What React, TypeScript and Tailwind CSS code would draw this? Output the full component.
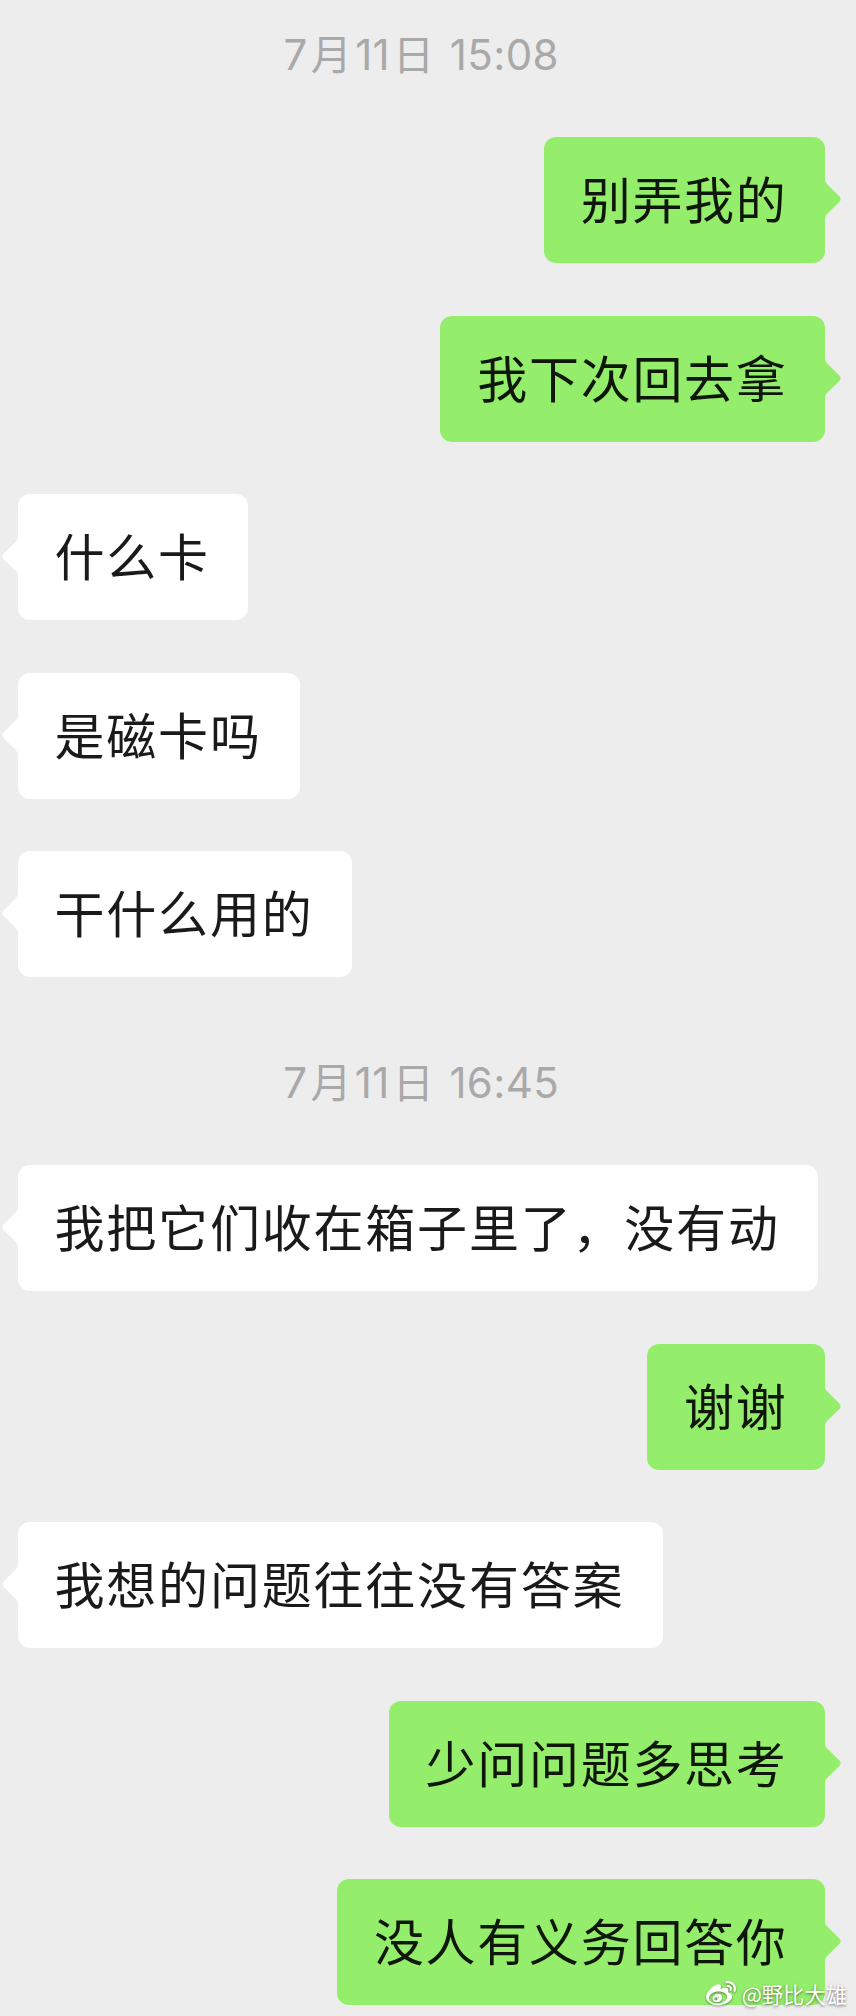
import { FaWeibo } from "react-icons/fa";

type Message = { from: "me" | "them"; text: string };

function Timestamp({ day, time, className = "" }: { day: [string, string]; time: string; className?: string }) {
  return (
    <div
      className={`flex h-[59.5px] items-center justify-center text-[42px] leading-none tracking-[0.4px] whitespace-pre text-[#a9a9a9] font-['Inter','Noto_Sans_CJK_SC',sans-serif] ${className}`}
    >
      <span>
        {day[0]}
        <span className="mx-[3px] text-[41px]">月</span>
        {day[1]}
        <span className="mx-[3px] text-[41px]">日</span> {time}
      </span>
    </div>
  );
}

function Tail({ className }: { className: string }) {
  return (
    <svg viewBox="0 0 16 40" className={`absolute top-[42px] h-10 w-4 ${className}`} fill="currentColor">
      <path d="M0 0V40C0 37.6 .9 36 2.6 34.4L14.4 22.9C16 21.2 16 19 14.4 17.4L2.6 5.8C.9 4.2 0 2.5 0 0Z" />
    </svg>
  );
}

function Bubble({ from, text }: Message) {
  const mine = from === "me";
  return (
    <div className={`flex ${mine ? "justify-end" : "justify-start"}`}>
      <div
        className={`relative flex h-[126px] items-center rounded-[12px] pb-[6px] pl-[37px] ${
          mine
            ? "bg-[#95ee6b] pr-[37.5px] tracking-[1.7px] text-[#0f170b]"
            : "bg-white pr-[38.2px] tracking-[1.8px] text-[#1a1a1a]"
        }`}
      >
        <Tail className={mine ? "left-full -ml-[0.5px] text-[#95ee6b]" : "right-full -mr-[0.5px] -scale-x-100 text-white"} />
        <span className="text-[50px] leading-none whitespace-nowrap">{text}</span>
      </div>
    </div>
  );
}

const afternoon: Message[] = [
  { from: "me", text: "别弄我的" },
  { from: "me", text: "我下次回去拿" },
  { from: "them", text: "什么卡" },
  { from: "them", text: "是磁卡吗" },
  { from: "them", text: "干什么用的" },
];

const later: Message[] = [
  { from: "them", text: "我把它们收在箱子里了，没有动" },
  { from: "me", text: "谢谢" },
  { from: "them", text: "我想的问题往往没有答案" },
  { from: "me", text: "少问问题多思考" },
  { from: "me", text: "没人有义务回答你" },
];

export default function App() {
  return (
    <main
      lang="zh-CN"
      className="relative flex h-[2016px] w-[856px] flex-col gap-[52.5px] overflow-hidden bg-[#ededed] pt-[25px] pr-[31px] pl-[17.5px] font-['Noto_Sans_CJK_SC',sans-serif]"
    >
      <Timestamp day={["7", "11"]} time="15:08" />
      {afternoon.map((m) => (
        <Bubble key={m.text} {...m} />
      ))}
      <Timestamp day={["7", "11"]} time="16:45" className="mt-[23.5px]" />
      {later.map((m) => (
        <Bubble key={m.text} {...m} />
      ))}
      <div className="absolute right-[9px] bottom-[7px] flex items-center gap-[6px] text-white">
        <FaWeibo className="size-[30px] drop-shadow-[0_1px_1px_rgba(0,0,0,0.45)]" />
        <span className="text-[21.3px] leading-[30px] [text-shadow:0_1px_3px_rgba(0,0,0,0.55)]">@野比大雄</span>
      </div>
    </main>
  );
}
